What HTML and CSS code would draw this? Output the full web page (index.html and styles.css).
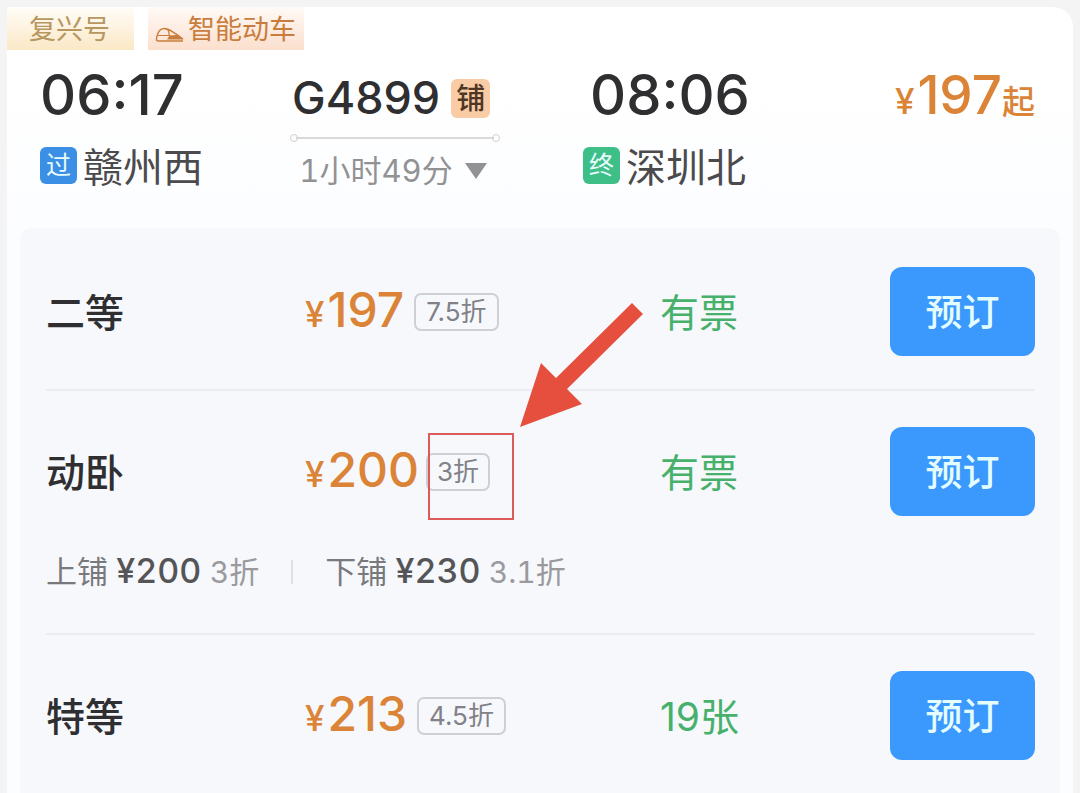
FILE: index.html
```html
<!DOCTYPE html>
<html lang="zh-CN">
<head>
<meta charset="utf-8">
<meta name="viewport" content="width=device-width, initial-scale=1">
<title>G4899 赣州西 - 深圳北</title>
<link rel="stylesheet" href="styles.css">
</head>
<body>
<main class="card">
  <div class="tags">
    <span class="tag tag-gold">复兴号</span>
    <span class="tag tag-orange">
      <svg class="train-icon" viewBox="0 0 30 16" aria-hidden="true">
        <path d="M1.500 11C2.500 6 5 1.500 9 1.500C14 1.500 20 6 28 12" fill="none" stroke="currentColor" stroke-width="1.400"/>
        <path d="M2.500 8.500H14.500L13 2.500" fill="none" stroke="currentColor" stroke-width="1.200"/>
        <path d="M14.500 8.500L22 8L28.500 12.500H12Z" fill="currentColor"/>
        <path d="M1.500 11V12.500Q1.500 14 3.500 14H28" fill="none" stroke="currentColor" stroke-width="1.400"/>
      </svg>智能动车</span>
  </div>

  <header class="trip">
    <div class="stop">
      <time class="time">06:17</time>
      <div class="station"><span class="mark mark-pass">过</span>赣州西</div>
    </div>
    <div class="train">
      <div class="number">G4899<span class="berth">铺</span></div>
      <div class="track"></div>
      <button class="duration" type="button">1小时49分<svg class="caret" viewBox="0 0 22 16" aria-hidden="true"><path d="M0 0H22L11 16Z" fill="currentColor"/></svg></button>
    </div>
    <div class="stop stop-end">
      <time class="time">08:06</time>
      <div class="station"><span class="mark mark-end">终</span>深圳北</div>
    </div>
    <div class="from-price"><span class="yen">¥</span>197<span class="suffix">起</span></div>
  </header>

  <ul class="seats">
    <li class="seat">
      <div class="row">
        <span class="name">二等</span>
        <span class="offer"><span class="price"><span class="yen">¥</span>197</span><span class="discount">7.5折</span></span>
        <span class="stock">有票</span>
        <button class="book" type="button">预订</button>
      </div>
    </li>
    <li class="seat">
      <div class="row">
        <span class="name">动卧</span>
        <span class="offer"><span class="price"><span class="yen">¥</span>200</span><span class="discount marked">3折<span class="highlight"></span><svg class="arrow" viewBox="0 0 124 125" aria-hidden="true"><path d="M0 124L21 60L36 75L112 0L123 11L47 86L62 101Z" fill="#e64e3e"/></svg></span></span>
        <span class="stock">有票</span>
        <button class="book" type="button">预订</button>
      </div>
      <div class="berths">
        <span>上铺 <b>¥200</b> <span class="off">3折</span></span>
        <span class="bar"></span>
        <span>下铺 <b>¥230</b> <span class="off">3.1折</span></span>
      </div>
    </li>
    <li class="seat">
      <div class="row">
        <span class="name">特等</span>
        <span class="offer"><span class="price"><span class="yen">¥</span>213</span><span class="discount">4.5折</span></span>
        <span class="stock">19张</span>
        <button class="book" type="button">预订</button>
      </div>
    </li>
  </ul>
</main>
</body>
</html>
```

FILE: styles.css
```css
* { box-sizing: border-box; }

body {
  margin: 0;
  padding: 7px 7px 0;
  background: #f4f4f5;
  color: #2f2f31;
  font-family: Inter, "Noto Sans CJK SC", sans-serif;
}

button {
  font: inherit;
  border: 0;
  cursor: pointer;
}

.card {
  min-height: calc(100vh - 7px);
  display: flex;
  flex-direction: column;
  padding: 0 13px;
  background: linear-gradient(#fff 60px, #fcfdff 220px);
  border-radius: 0 20px 0 0;
}

/* Train type tags */
.tags {
  display: flex;
  gap: 14px;
  margin-left: -13px;
}

.tag {
  display: flex;
  align-items: center;
  height: 43px;
  padding-top: 3px;
  font-size: 27px;
  line-height: 40px;
}

.tag-gold {
  padding-left: 22px;
  padding-right: 24px;
  color: #b7965f;
  background: linear-gradient(#fffdf8, #fbe8c6);
}

.tag-orange {
  gap: 3px;
  padding-left: 7px;
  padding-right: 8px;
  color: #c97d3c;
  background: linear-gradient(#fffaf7, #fbdfcd);
}

.train-icon {
  width: 30px;
  height: 16px;
  margin-top: 10px;
}

/* Route summary */
.trip {
  display: grid;
  grid-template-columns: 250fr 293fr 240fr 212fr;
  padding: 12px 25px 0 20px;
  height: 178px;
}

.time {
  display: block;
  font-size: 56px;
  font-weight: 450;
  line-height: 66px;
}

.stop-end .time { padding-left: 7px; }

.station {
  display: flex;
  align-items: center;
  gap: 6px;
  margin-top: 12px;
  color: #4b4b4d;
  font-size: 40px;
  line-height: 56px;
}

.mark {
  width: 37px;
  height: 37px;
  margin-bottom: 5px;
  border-radius: 6px;
  color: #e8fcff;
  font-size: 25px;
  line-height: 37px;
  text-align: center;
}

.mark-pass { background: #3b8fe4; }
.mark-end { background: #3fbf88; }

.train {
  width: 210px;
  text-align: center;
}

.number {
  display: flex;
  align-items: center;
  padding-left: 2px;
  gap: 11px;
  font-size: 45px;
  font-weight: 450;
  line-height: 72px;
}

.berth {
  width: 39px;
  height: 39px;
  border-radius: 6px;
  background: #f9cca5;
  color: #4e3524;
  font-size: 29px;
  font-weight: 500;
  line-height: 39px;
}

.track {
  display: flex;
  align-items: center;
  justify-content: space-between;
  height: 8px;
  background: linear-gradient(#dadada, #dadada) center / calc(100% - 12px) 2px no-repeat;
}

.track::before,
.track::after {
  content: "";
  width: 6px;
  height: 6px;
  border: 1px solid #cfcfcf;
  border-radius: 50%;
}

.duration {
  display: flex;
  align-items: center;
  justify-content: center;
  gap: 12px;
  width: 100%;
  padding: 5px 4px 0 0;
  background: none;
  color: #929294;
  font-size: 31px;
  font-variant-numeric: tabular-nums;
  line-height: 48px;
  white-space: nowrap;
}

.caret {
  width: 22px;
  height: 16px;
}

.from-price {
  color: #db8438;
  font-size: 53px;
  font-weight: 500;
  line-height: 66px;
  text-align: right;
  white-space: nowrap;
}

.yen {
  margin-right: 3px;
  font-size: 35px;
  font-weight: 450;
}

.suffix { font-size: 33px; }

/* Seat classes */
.seats {
  flex: 1;
  margin: 0;
  padding: 0 25px 0 26px;
  list-style: none;
  background: #f6f8fc;
  border-radius: 12px 12px 0 0;
}

.seat { padding: 36px 0 32px; }
.seat:first-child { padding: 39px 0 33px; }
.seat + .seat { border-top: 2px solid #eaedf2; }

.row {
  display: grid;
  grid-template-columns: 259fr 355fr 230fr 145px;
  align-items: center;
}

.name,
.stock {
  padding-bottom: 4px;
  font-size: 39px;
}

.name { font-weight: 500; }
.stock { color: #47b16c; }

.offer {
  display: flex;
  align-items: center;
  gap: 10px;
}

.price {
  color: #db8438;
  font-size: 48px;
  font-weight: 500;
  line-height: 56px;
  white-space: nowrap;
}

.discount {
  padding: 0 10px;
  border: 2px solid #cfd0d6;
  border-radius: 7px;
  color: #818187;
  font-size: 26px;
  line-height: 34px;
  white-space: nowrap;
}

.book {
  height: 89px;
  padding-bottom: 4px;
  border-radius: 12px;
  background: #3b98fc;
  color: #e4fdff;
  font-size: 37px;
  font-weight: 500;
}

/* Annotation over the highlighted discount */
.marked {
  position: relative;
  margin-left: -3px;
  padding: 0 9px;
}

.highlight {
  position: absolute;
  top: -22px;
  left: 0;
  width: 86px;
  height: 87px;
  border: 2px solid #dc5a58;
}

.arrow {
  position: absolute;
  left: 92px;
  bottom: 61px;
  width: 124px;
  height: 125px;
}

/* Berth prices */
.berths {
  display: flex;
  align-items: center;
  margin-top: 32px;
  margin-bottom: 6px;
  color: #79797c;
  font-size: 31px;
  font-variant-numeric: tabular-nums;
  line-height: 46px;
}

.berths b {
  color: #555558;
  font-size: 34px;
  font-weight: 500;
}

.off {
  color: #9a9a9e;
  font-size: 30px;
}

.bar {
  width: 2px;
  height: 24px;
  margin: 0 32px;
  background: #dddfe4;
}
```
